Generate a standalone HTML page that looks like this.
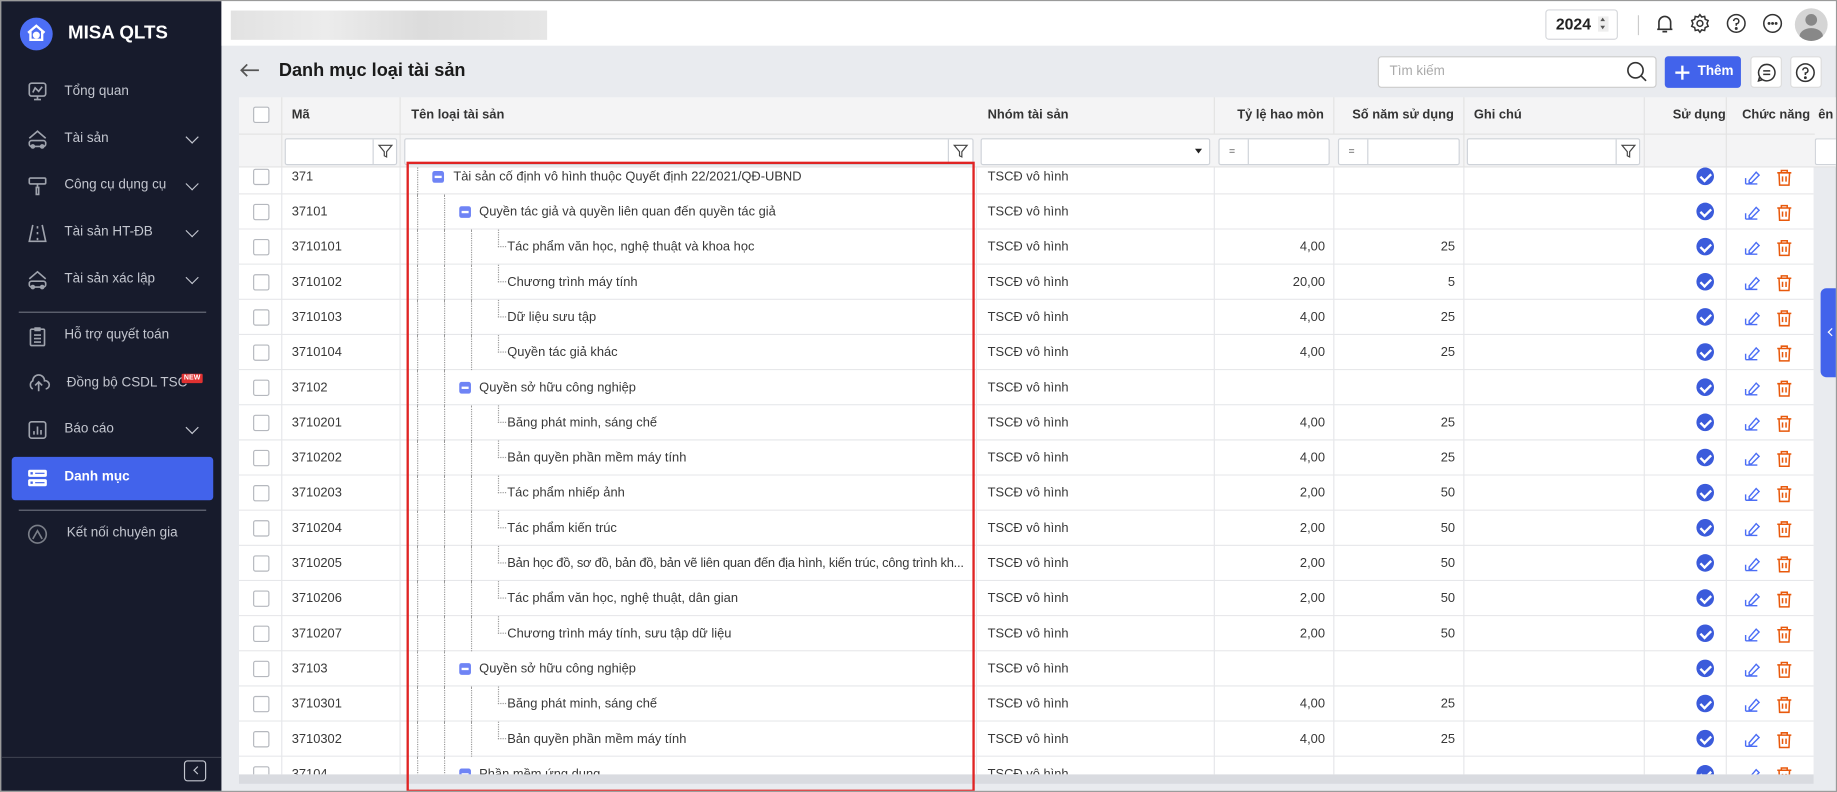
<!DOCTYPE html>
<html><head><meta charset="utf-8">
<style>
*{box-sizing:border-box;margin:0;padding:0}
html,body{width:1837px;height:792px;overflow:hidden;background:#a8a8a8}
#w{position:absolute;left:0;top:0;width:1568px;height:676px;transform:scale(1.17156);transform-origin:0 0;font-family:"Liberation Sans",Arial,sans-serif;font-size:11px;color:#383838;background:#e9ebef;overflow:hidden;border:1px solid #9a9a9a}
.a{position:absolute}
#sb{left:0;top:0;width:188px;height:676px;background:#171b2c}
.it{position:absolute;left:54px;color:#c3c6cf;font-size:11.5px}
.ic{position:absolute;left:22px;width:18px;height:18px}
.chev{position:absolute;left:159px;width:8px;height:8px;border-right:1.6px solid #c3c6cf;border-bottom:1.6px solid #c3c6cf;transform:rotate(45deg)}
.sep{position:absolute;left:15px;width:160px;height:1px;background:#6b6f7c}
#top{left:188px;top:0;width:1380px;height:38px;background:#fff}
.hd{position:absolute;top:82px;height:31px;font-weight:bold;color:#333;font-size:11px;line-height:31px;white-space:nowrap}
.fl{position:absolute;top:117px;height:23px;background:#fff;border:1px solid #cfd3d9;border-radius:2px}
.r{position:absolute;left:0;width:1344px;height:30px;border-bottom:1px solid #e6e7ea;background:#fff}
.r span{position:absolute;top:0;line-height:30px;white-space:nowrap}
.cb{position:absolute;left:12px;top:8px;width:14px;height:14px;border:1px solid #b5b8be;border-radius:2px;background:#fff}
.g{position:absolute;top:0;height:30px;border-left:1px dotted #999}
.el{position:absolute;height:15px;top:0;border-left:1px dotted #999;border-bottom:1px dotted #999;width:7px}
.mn{position:absolute;top:10px;width:10px;height:10px;border-radius:2px;background:#6f84f5}
.mn:after{content:"";position:absolute;left:2px;top:4px;width:6px;height:2px;background:#fff}
.ok{position:absolute;left:1244px;top:7px;width:15px;height:15px;border-radius:50%;background:#3b5bdb}
.ok:after{content:"";position:absolute;left:4.5px;top:2.5px;width:4px;height:7px;border-right:2px solid #fff;border-bottom:2px solid #fff;transform:rotate(45deg)}
</style></head><body><div id="w">
<div id="sb" class="a">
 <div class="a" style="left:16px;top:14px;width:28px;height:28px;border-radius:50%;background:#4c6ef5"></div>
 <svg class="a" style="left:21px;top:18px" width="18" height="18" viewBox="0 0 18 18" fill="none" stroke="#fff" stroke-width="2"><path d="M2 9 L9 3 L16 9 M4 8 V15 H14 V8"/><circle cx="9" cy="11" r="2" fill="#fff"/></svg>
 <div class="a" style="left:57px;top:19px;color:#fff;font-weight:bold;font-size:16px">MISA QLTS</div>
 <svg class="ic" style="top:68px" viewBox="0 0 18 18" fill="none" stroke="#9fa3ad" stroke-width="1.4"><rect x="2" y="2" width="14" height="11" rx="2"/><path d="M5 10 L7 6 L10 9 L13 5 M9 13 V16 M6 16 H12"/></svg>
 <div class="it" style="top:71px">Tổng quan</div>
 <svg class="ic" style="top:109px" viewBox="0 0 18 18" fill="none" stroke="#9fa3ad" stroke-width="1.4"><path d="M2 8 L9 2 L16 8"/><rect x="2" y="10" width="14" height="5" rx="2"/><circle cx="5" cy="15" r="1.3"/><circle cx="13" cy="15" r="1.3"/></svg>
 <div class="it" style="top:111px">Tài sản</div><div class="chev" style="top:112px"></div>
 <svg class="ic" style="top:149px" viewBox="0 0 18 18" fill="none" stroke="#9fa3ad" stroke-width="1.4"><rect x="2" y="2" width="14" height="5" rx="1"/><path d="M9 7 V10 M8 10 h2 v6 h-2z"/></svg>
 <div class="it" style="top:151px">Công cụ dụng cụ</div><div class="chev" style="top:152px"></div>
 <svg class="ic" style="top:189px" viewBox="0 0 18 18" fill="none" stroke="#9fa3ad" stroke-width="1.4"><path d="M5 2 L2 16 H16 L13 2 M9 3 V5 M9 8 V10 M9 13 V15"/></svg>
 <div class="it" style="top:191px">Tài sản HT-ĐB</div><div class="chev" style="top:192px"></div>
 <svg class="ic" style="top:229px" viewBox="0 0 18 18" fill="none" stroke="#9fa3ad" stroke-width="1.4"><path d="M2 8 L9 2 L16 8"/><rect x="2" y="10" width="14" height="5" rx="2"/><circle cx="5" cy="15" r="1.3"/><circle cx="13" cy="15" r="1.3"/></svg>
 <div class="it" style="top:231px">Tài sản xác lập</div><div class="chev" style="top:232px"></div>
 <div class="sep" style="top:265px"></div>
 <svg class="ic" style="top:277px" viewBox="0 0 18 18" fill="none" stroke="#9fa3ad" stroke-width="1.4"><rect x="3" y="3" width="12" height="14" rx="1"/><path d="M7 2 h4 v2 h-4z M6 8 h6 M6 11 h6 M6 14 h6"/></svg>
 <div class="it" style="top:279px">Hỗ trợ quyết toán</div>
 <svg class="ic" style="top:317px;width:20px" viewBox="0 0 20 18" fill="none" stroke="#9fa3ad" stroke-width="1.4"><path d="M5 14 A4 4 0 0 1 5 7 A5 5 0 0 1 15 7 A3.5 3.5 0 0 1 16 14 M10 16 V9 M7 11 L10 8 L13 11"/></svg>
 <div class="it" style="top:320px;left:56px">Đồng bộ CSDL TSC</div>
 <div class="a" style="left:154px;top:318px;background:#e03131;color:#fff;font-size:6px;font-weight:bold;padding:1px 2px;border-radius:1px">NEW</div>
 <svg class="ic" style="top:357px" viewBox="0 0 18 18" fill="none" stroke="#9fa3ad" stroke-width="1.4"><rect x="2" y="2" width="14" height="14" rx="2"/><path d="M6 13 V10 M9 13 V6 M12 13 V9"/></svg>
 <div class="it" style="top:359px">Báo cáo</div><div class="chev" style="top:360px"></div>
 <div class="a" style="left:9px;top:389px;width:172px;height:37px;background:#4263eb;border-radius:3px"></div>
 <svg class="ic" style="top:398px" viewBox="0 0 18 18"><rect x="1" y="2" width="16" height="6" rx="1.5" fill="#fff"/><rect x="1" y="10" width="16" height="6" rx="1.5" fill="#fff"/><rect x="3" y="4" width="2" height="2" fill="#4263eb"/><rect x="3" y="12" width="2" height="2" fill="#4263eb"/><rect x="7" y="4.5" width="8" height="1" fill="#4263eb"/><rect x="7" y="12.5" width="8" height="1" fill="#4263eb"/></svg>
 <div class="it" style="top:400px;color:#fff;font-weight:bold">Danh mục</div>
 <div class="sep" style="top:434px"></div>
 <svg class="ic" style="top:446px" viewBox="0 0 18 18" fill="none" stroke="#7a7e88" stroke-width="1.4"><circle cx="9" cy="9" r="7.5"/><path d="M5 13 L9 6 L13 13"/></svg>
 <div class="it" style="top:448px;left:56px">Kết nối chuyên gia</div>
 <div class="a" style="left:0;top:645px;width:188px;height:1px;background:#3a3e4c"></div>
 <div class="a" style="left:156px;top:648px;width:19px;height:18px;border:1px solid #c3c6cf;border-radius:3px"></div>
 <div class="a" style="left:165px;top:654px;width:5px;height:5px;border-left:1.3px solid #c3c6cf;border-bottom:1.3px solid #c3c6cf;transform:rotate(45deg)"></div>
</div>
<div id="top" class="a">
 <div class="a" style="left:8px;top:8px;width:270px;height:25px;background:linear-gradient(90deg,#e2e2e2,#ececec 30%,#dcdcdc 60%,#e6e6e6)"></div>
 <div class="a" style="left:1130px;top:7px;width:62px;height:26px;border:1px solid #d6d8dc;border-radius:3px;background:#fff"></div>
 <div class="a" style="left:1139px;top:12px;font-weight:bold;font-size:13.5px;color:#222">2024</div>
 <div class="a" style="left:1175px;top:13px;width:9px;height:13px;background:#eee"></div>
 <div class="a" style="left:1177px;top:14px;border:2.5px solid transparent;border-bottom:3px solid #555;border-top:none"></div>
 <div class="a" style="left:1177px;top:21px;border:2.5px solid transparent;border-top:3px solid #555;border-bottom:none"></div>
 <div class="a" style="left:1209px;top:12px;width:1px;height:17px;background:#ccc"></div>
 <svg class="a" style="left:1222px;top:9px" width="20" height="20" viewBox="0 0 20 20" fill="none" stroke="#333" stroke-width="1.4"><path d="M5 15 V9 A5 5 0 0 1 15 9 V15 H3.5 H16.5 M8 17 H12"/></svg>
 <svg class="a" style="left:1253px;top:10px" width="18" height="18" viewBox="0 0 18 18" fill="none" stroke="#333" stroke-width="1.3"><circle cx="9" cy="9" r="2.5"/><path d="M9 1.5 L10.5 3.5 L13 3 L13.5 5.5 L16 6.5 L15 9 L16 11.5 L13.5 12.5 L13 15 L10.5 14.5 L9 16.5 L7.5 14.5 L5 15 L4.5 12.5 L2 11.5 L3 9 L2 6.5 L4.5 5.5 L5 3 L7.5 3.5Z"/></svg>
 <svg class="a" style="left:1284px;top:10px" width="18" height="18" viewBox="0 0 18 18" fill="none" stroke="#333" stroke-width="1.3"><circle cx="9" cy="9" r="7.5"/><path d="M6.8 7 A2.2 2.2 0 1 1 9 9.3 V11"/><circle cx="9" cy="13.3" r=".6" fill="#333"/></svg>
 <svg class="a" style="left:1315px;top:10px" width="18" height="18" viewBox="0 0 18 18" fill="none" stroke="#333" stroke-width="1.3"><circle cx="9" cy="9" r="7.5"/><circle cx="6" cy="9" r=".6" fill="#333"/><circle cx="9" cy="9" r=".6" fill="#333"/><circle cx="12" cy="9" r=".6" fill="#333"/></svg>
 <div class="a" style="left:1343px;top:6px;width:28px;height:28px;border-radius:50%;background:#d5d5d5;overflow:hidden"><div class="a" style="left:9px;top:5px;width:10px;height:10px;border-radius:50%;background:#888"></div><div class="a" style="left:4px;top:17px;width:20px;height:14px;border-radius:50%;background:#888"></div></div>
</div>
<svg class="a" style="left:203px;top:52px" width="18" height="14" viewBox="0 0 18 14" fill="none" stroke="#555" stroke-width="1.5"><path d="M17 7 H2 M7 2 L2 7 L7 12"/></svg>
<div class="a" style="left:237px;top:51px;font-size:15.5px;font-weight:bold;color:#1a1a1a">Danh mục loại tài sản</div>
<div class="a" style="left:1175px;top:47px;width:238px;height:27px;background:#fff;border:1px solid #ccc;border-radius:3px"></div>
<div class="a" style="left:1185px;top:54px;color:#aaa;font-size:11.5px">Tìm kiếm</div>
<svg class="a" style="left:1387px;top:51px" width="18" height="18" viewBox="0 0 18 18" fill="none" stroke="#333" stroke-width="1.4"><circle cx="8" cy="8" r="6.5"/><path d="M13 13 L17 17"/></svg>
<div class="a" style="left:1420px;top:47px;width:65px;height:27px;background:#4263eb;border-radius:3px;color:#fff;font-weight:bold;font-size:11.5px;line-height:27px;padding-left:28px">Thêm</div>
<div class="a" style="left:1429px;top:60px;width:12px;height:1.5px;background:#fff"></div><div class="a" style="left:1434.2px;top:55px;width:1.5px;height:12px;background:#fff"></div>
<div class="a" style="left:1493px;top:47px;width:27px;height:27px;background:#fff;border:1px solid #ddd;border-radius:3px"></div>
<svg class="a" style="left:1498px;top:52px" width="18" height="18" viewBox="0 0 18 18" fill="none" stroke="#333" stroke-width="1.3"><path d="M9 2 A7 7 0 1 1 3 12.5 L2 16 L5.5 15 M9 2 A7 7 0 0 0 3 12.5 M6 7.5 H12 M6 10.5 H12"/></svg>
<div class="a" style="left:1527px;top:47px;width:27px;height:27px;background:#fff;border:1px solid #ddd;border-radius:3px"></div>
<svg class="a" style="left:1531px;top:52px" width="18" height="18" viewBox="0 0 18 18" fill="none" stroke="#333" stroke-width="1.3"><circle cx="9" cy="9" r="7.5"/><path d="M6.8 7 A2.2 2.2 0 1 1 9 9.3 V11"/><circle cx="9" cy="13.3" r=".6" fill="#333"/></svg>
<!-- table header -->
<div class="a" style="left:203px;top:82px;width:1365px;height:60px;background:#f4f4f5;border-bottom:1px solid #e3e3e3"></div>
<div class="a" style="left:203px;top:113px;width:1345px;height:1px;background:#e3e3e3"></div>
<div class="a" style="left:215px;top:90px;width:14px;height:14px;border:1px solid #b5b8be;border-radius:2px;background:#fff"></div>
<div class="hd" style="left:248px">Mã</div>
<div class="hd" style="left:350px">Tên loại tài sản</div>
<div class="hd" style="left:842px">Nhóm tài sản</div>
<div class="hd" style="left:1036px;width:93px;text-align:right">Tỷ lệ hao mòn</div>
<div class="hd" style="left:1137px;width:103px;text-align:right">Số năm sử dụng</div>
<div class="hd" style="left:1257px">Ghi chú</div>
<div class="hd" style="left:1402px;width:70px;text-align:right;overflow:hidden">Sử dụng</div>
<div class="hd" style="left:1486px">Chức năng</div>
<div class="hd" style="left:1551px;width:17px;overflow:hidden">ên</div>
<div class="a" style="left:239px;top:82px;width:1px;height:60px;background:#e3e3e3"></div>
<div class="a" style="left:340px;top:82px;width:1px;height:60px;background:#e3e3e3"></div>
<div class="a" style="left:1035px;top:82px;width:1px;height:31px;background:#e3e3e3"></div>
<div class="a" style="left:1137px;top:82px;width:1px;height:31px;background:#e3e3e3"></div>
<div class="a" style="left:1248px;top:82px;width:1px;height:60px;background:#e3e3e3"></div>
<div class="a" style="left:1402px;top:82px;width:1px;height:60px;background:#e3e3e3"></div>
<div class="a" style="left:1472px;top:82px;width:1px;height:60px;background:#e3e3e3"></div>
<div class="fl" style="left:242px;width:96px"></div><div class="a" style="left:317px;top:118px;width:1px;height:21px;background:#cfd3d9"></div>
<svg class="a" style="left:321px;top:121px" width="14" height="14" viewBox="0 0 14 14" fill="none" stroke="#444" stroke-width="1"><path d="M1.5 2 H12.5 L8 7.5 V12 L6 11 V7.5Z"/></svg>
<div class="fl" style="left:344px;width:486px"></div><div class="a" style="left:808px;top:118px;width:1px;height:21px;background:#cfd3d9"></div>
<svg class="a" style="left:812px;top:121px" width="14" height="14" viewBox="0 0 14 14" fill="none" stroke="#444" stroke-width="1"><path d="M1.5 2 H12.5 L8 7.5 V12 L6 11 V7.5Z"/></svg>
<div class="fl" style="left:836px;width:196px"></div><div class="a" style="left:1019px;top:126px;border:3.5px solid transparent;border-top:4px solid #222;border-bottom:none"></div>
<div class="fl" style="left:1039px;width:95px"></div><div class="a" style="left:1064px;top:118px;width:1px;height:21px;background:#cfd3d9"></div><div class="a" style="left:1048px;top:123px;font-size:9px;color:#555">=</div>
<div class="fl" style="left:1141px;width:104px"></div><div class="a" style="left:1166px;top:118px;width:1px;height:21px;background:#cfd3d9"></div><div class="a" style="left:1150px;top:123px;font-size:9px;color:#555">=</div>
<div class="fl" style="left:1251px;width:148px"></div><div class="a" style="left:1378px;top:118px;width:1px;height:21px;background:#cfd3d9"></div>
<svg class="a" style="left:1382px;top:121px" width="14" height="14" viewBox="0 0 14 14" fill="none" stroke="#444" stroke-width="1"><path d="M1.5 2 H12.5 L8 7.5 V12 L6 11 V7.5Z"/></svg>
<div class="fl" style="left:1548px;width:20px;border-right:none"></div>
<!-- body -->
<div class="a" style="left:203px;top:142px;width:1344px;height:518px;overflow:hidden;background:#fff">
<div class="a" style="left:0;top:-7px;width:1344px">
<div class="r" style="top:0"><i class="cb"></i><span style="left:45px">371</span><i class="g" style="left:152px"></i><i class="mn" style="left:165px"></i><span style="left:183px">Tài sản cố định vô hình thuộc Quyết định 22/2021/QĐ-UBND</span><span style="left:639px">TSCĐ vô hình</span><i class="ok"></i></div>
<div class="r" style="top:30px"><i class="cb"></i><span style="left:45px">37101</span><i class="g" style="left:152px"></i><i class="g" style="left:175px"></i><i class="mn" style="left:188px"></i><span style="left:205px">Quyền tác giả và quyền liên quan đến quyền tác giả</span><span style="left:639px">TSCĐ vô hình</span><i class="ok"></i></div>
<div class="r" style="top:60px"><i class="cb"></i><span style="left:45px">3710101</span><i class="g" style="left:152px"></i><i class="g" style="left:175px"></i><i class="g" style="left:198px"></i><i class="el" style="left:221px"></i><span style="left:229px">Tác phẩm văn học, nghệ thuật và khoa học</span><span style="left:639px">TSCĐ vô hình</span><span style="right:417px">4,00</span><span style="right:306px">25</span><i class="ok"></i></div>
<div class="r" style="top:90px"><i class="cb"></i><span style="left:45px">3710102</span><i class="g" style="left:152px"></i><i class="g" style="left:175px"></i><i class="g" style="left:198px"></i><i class="el" style="left:221px"></i><span style="left:229px">Chương trình máy tính</span><span style="left:639px">TSCĐ vô hình</span><span style="right:417px">20,00</span><span style="right:306px">5</span><i class="ok"></i></div>
<div class="r" style="top:120px"><i class="cb"></i><span style="left:45px">3710103</span><i class="g" style="left:152px"></i><i class="g" style="left:175px"></i><i class="g" style="left:198px"></i><i class="el" style="left:221px"></i><span style="left:229px">Dữ liệu sưu tập</span><span style="left:639px">TSCĐ vô hình</span><span style="right:417px">4,00</span><span style="right:306px">25</span><i class="ok"></i></div>
<div class="r" style="top:150px"><i class="cb"></i><span style="left:45px">3710104</span><i class="g" style="left:152px"></i><i class="g" style="left:175px"></i><i class="g" style="left:198px"></i><i class="el" style="left:221px"></i><span style="left:229px">Quyền tác giả khác</span><span style="left:639px">TSCĐ vô hình</span><span style="right:417px">4,00</span><span style="right:306px">25</span><i class="ok"></i></div>
<div class="r" style="top:180px"><i class="cb"></i><span style="left:45px">37102</span><i class="g" style="left:152px"></i><i class="g" style="left:175px"></i><i class="mn" style="left:188px"></i><span style="left:205px">Quyền sở hữu công nghiệp</span><span style="left:639px">TSCĐ vô hình</span><i class="ok"></i></div>
<div class="r" style="top:210px"><i class="cb"></i><span style="left:45px">3710201</span><i class="g" style="left:152px"></i><i class="g" style="left:175px"></i><i class="g" style="left:198px"></i><i class="el" style="left:221px"></i><span style="left:229px">Băng phát minh, sáng chế</span><span style="left:639px">TSCĐ vô hình</span><span style="right:417px">4,00</span><span style="right:306px">25</span><i class="ok"></i></div>
<div class="r" style="top:240px"><i class="cb"></i><span style="left:45px">3710202</span><i class="g" style="left:152px"></i><i class="g" style="left:175px"></i><i class="g" style="left:198px"></i><i class="el" style="left:221px"></i><span style="left:229px">Bản quyền phần mềm máy tính</span><span style="left:639px">TSCĐ vô hình</span><span style="right:417px">4,00</span><span style="right:306px">25</span><i class="ok"></i></div>
<div class="r" style="top:270px"><i class="cb"></i><span style="left:45px">3710203</span><i class="g" style="left:152px"></i><i class="g" style="left:175px"></i><i class="g" style="left:198px"></i><i class="el" style="left:221px"></i><span style="left:229px">Tác phẩm nhiếp ảnh</span><span style="left:639px">TSCĐ vô hình</span><span style="right:417px">2,00</span><span style="right:306px">50</span><i class="ok"></i></div>
<div class="r" style="top:300px"><i class="cb"></i><span style="left:45px">3710204</span><i class="g" style="left:152px"></i><i class="g" style="left:175px"></i><i class="g" style="left:198px"></i><i class="el" style="left:221px"></i><span style="left:229px">Tác phẩm kiến trúc</span><span style="left:639px">TSCĐ vô hình</span><span style="right:417px">2,00</span><span style="right:306px">50</span><i class="ok"></i></div>
<div class="r" style="top:330px"><i class="cb"></i><span style="left:45px">3710205</span><i class="g" style="left:152px"></i><i class="g" style="left:175px"></i><i class="g" style="left:198px"></i><i class="el" style="left:221px"></i><span style="left:229px;width:396px;overflow:hidden;letter-spacing:-0.2px">Bản học đồ, sơ đồ, bản đồ, bản vẽ liên quan đến địa hình, kiến trúc, công trình kh...</span><span style="left:639px">TSCĐ vô hình</span><span style="right:417px">2,00</span><span style="right:306px">50</span><i class="ok"></i></div>
<div class="r" style="top:360px"><i class="cb"></i><span style="left:45px">3710206</span><i class="g" style="left:152px"></i><i class="g" style="left:175px"></i><i class="g" style="left:198px"></i><i class="el" style="left:221px"></i><span style="left:229px">Tác phẩm văn học, nghệ thuật, dân gian</span><span style="left:639px">TSCĐ vô hình</span><span style="right:417px">2,00</span><span style="right:306px">50</span><i class="ok"></i></div>
<div class="r" style="top:390px"><i class="cb"></i><span style="left:45px">3710207</span><i class="g" style="left:152px"></i><i class="g" style="left:175px"></i><i class="g" style="left:198px"></i><i class="el" style="left:221px"></i><span style="left:229px">Chương trình máy tính, sưu tập dữ liệu</span><span style="left:639px">TSCĐ vô hình</span><span style="right:417px">2,00</span><span style="right:306px">50</span><i class="ok"></i></div>
<div class="r" style="top:420px"><i class="cb"></i><span style="left:45px">37103</span><i class="g" style="left:152px"></i><i class="g" style="left:175px"></i><i class="mn" style="left:188px"></i><span style="left:205px">Quyền sở hữu công nghiệp</span><span style="left:639px">TSCĐ vô hình</span><i class="ok"></i></div>
<div class="r" style="top:450px"><i class="cb"></i><span style="left:45px">3710301</span><i class="g" style="left:152px"></i><i class="g" style="left:175px"></i><i class="g" style="left:198px"></i><i class="el" style="left:221px"></i><span style="left:229px">Băng phát minh, sáng chế</span><span style="left:639px">TSCĐ vô hình</span><span style="right:417px">4,00</span><span style="right:306px">25</span><i class="ok"></i></div>
<div class="r" style="top:480px"><i class="cb"></i><span style="left:45px">3710302</span><i class="g" style="left:152px"></i><i class="g" style="left:175px"></i><i class="g" style="left:198px"></i><i class="el" style="left:221px"></i><span style="left:229px">Bản quyền phần mềm máy tính</span><span style="left:639px">TSCĐ vô hình</span><span style="right:417px">4,00</span><span style="right:306px">25</span><i class="ok"></i></div>
<div class="r" style="top:510px"><i class="cb"></i><span style="left:45px">37104</span><i class="g" style="left:152px"></i><i class="g" style="left:175px"></i><i class="mn" style="left:188px"></i><span style="left:205px">Phần mềm ứng dụng</span><span style="left:639px">TSCĐ vô hình</span><i class="ok"></i></div>
</div>
<div class="a" style="left:36px;top:0;width:1px;height:530px;background:#e6e7ea"></div>
<div class="a" style="left:137px;top:0;width:1px;height:530px;background:#e6e7ea"></div>
<div class="a" style="left:629px;top:0;width:1px;height:530px;background:#e6e7ea"></div>
<div class="a" style="left:832px;top:0;width:1px;height:530px;background:#e6e7ea"></div>
<div class="a" style="left:934px;top:0;width:1px;height:530px;background:#e6e7ea"></div>
<div class="a" style="left:1045px;top:0;width:1px;height:530px;background:#e6e7ea"></div>
<div class="a" style="left:1199px;top:0;width:1px;height:530px;background:#e6e7ea"></div>
<div class="a" style="left:1269px;top:0;width:1px;height:530px;background:#e6e7ea"></div>
</div>
<svg class="a" style="left:1486px;top:142px" width="50" height="526" viewBox="0 0 50 526">
<defs><g id="ea"><path d="M3 13 V8 M3 13 H13 M6 10 L12 3 L14.5 5.5 L8 12 H6Z" fill="none" stroke="#4c6ef5" stroke-width="1.2"/></g>
<g id="ta"><path d="M3 4.5 H15 M6.5 4.5 V2.5 H11.5 V4.5 M4.5 4.5 L5 15 H13 L13.5 4.5 M7.5 7.5 V12 M10.5 7.5 V12" fill="none" stroke="#e8590c" stroke-width="1.3"/></g></defs>
<use href="#ea" y="1"/><use href="#ta" x="27" y="0"/>
<use href="#ea" y="31"/><use href="#ta" x="27" y="30"/>
<use href="#ea" y="61"/><use href="#ta" x="27" y="60"/>
<use href="#ea" y="91"/><use href="#ta" x="27" y="90"/>
<use href="#ea" y="121"/><use href="#ta" x="27" y="120"/>
<use href="#ea" y="151"/><use href="#ta" x="27" y="150"/>
<use href="#ea" y="181"/><use href="#ta" x="27" y="180"/>
<use href="#ea" y="211"/><use href="#ta" x="27" y="210"/>
<use href="#ea" y="241"/><use href="#ta" x="27" y="240"/>
<use href="#ea" y="271"/><use href="#ta" x="27" y="270"/>
<use href="#ea" y="301"/><use href="#ta" x="27" y="300"/>
<use href="#ea" y="331"/><use href="#ta" x="27" y="330"/>
<use href="#ea" y="361"/><use href="#ta" x="27" y="360"/>
<use href="#ea" y="391"/><use href="#ta" x="27" y="390"/>
<use href="#ea" y="421"/><use href="#ta" x="27" y="420"/>
<use href="#ea" y="451"/><use href="#ta" x="27" y="450"/>
<use href="#ea" y="481"/><use href="#ta" x="27" y="480"/>
<use href="#ea" y="511"/><use href="#ta" x="27" y="510"/>
</svg>
<div class="a" style="left:203px;top:660px;width:1344px;height:8px;background:#d9dbe0"></div>
<div class="a" style="left:346px;top:137px;width:485px;height:538px;border:2px solid #e02424"></div>
<div class="a" style="left:1553px;top:245px;width:16px;height:76px;background:#4263eb;border-radius:5px 0 0 5px"></div>
<div class="a" style="left:1560px;top:280px;width:5px;height:5px;border-left:1.4px solid #fff;border-bottom:1.4px solid #fff;transform:rotate(45deg)"></div>
</div></body></html>
